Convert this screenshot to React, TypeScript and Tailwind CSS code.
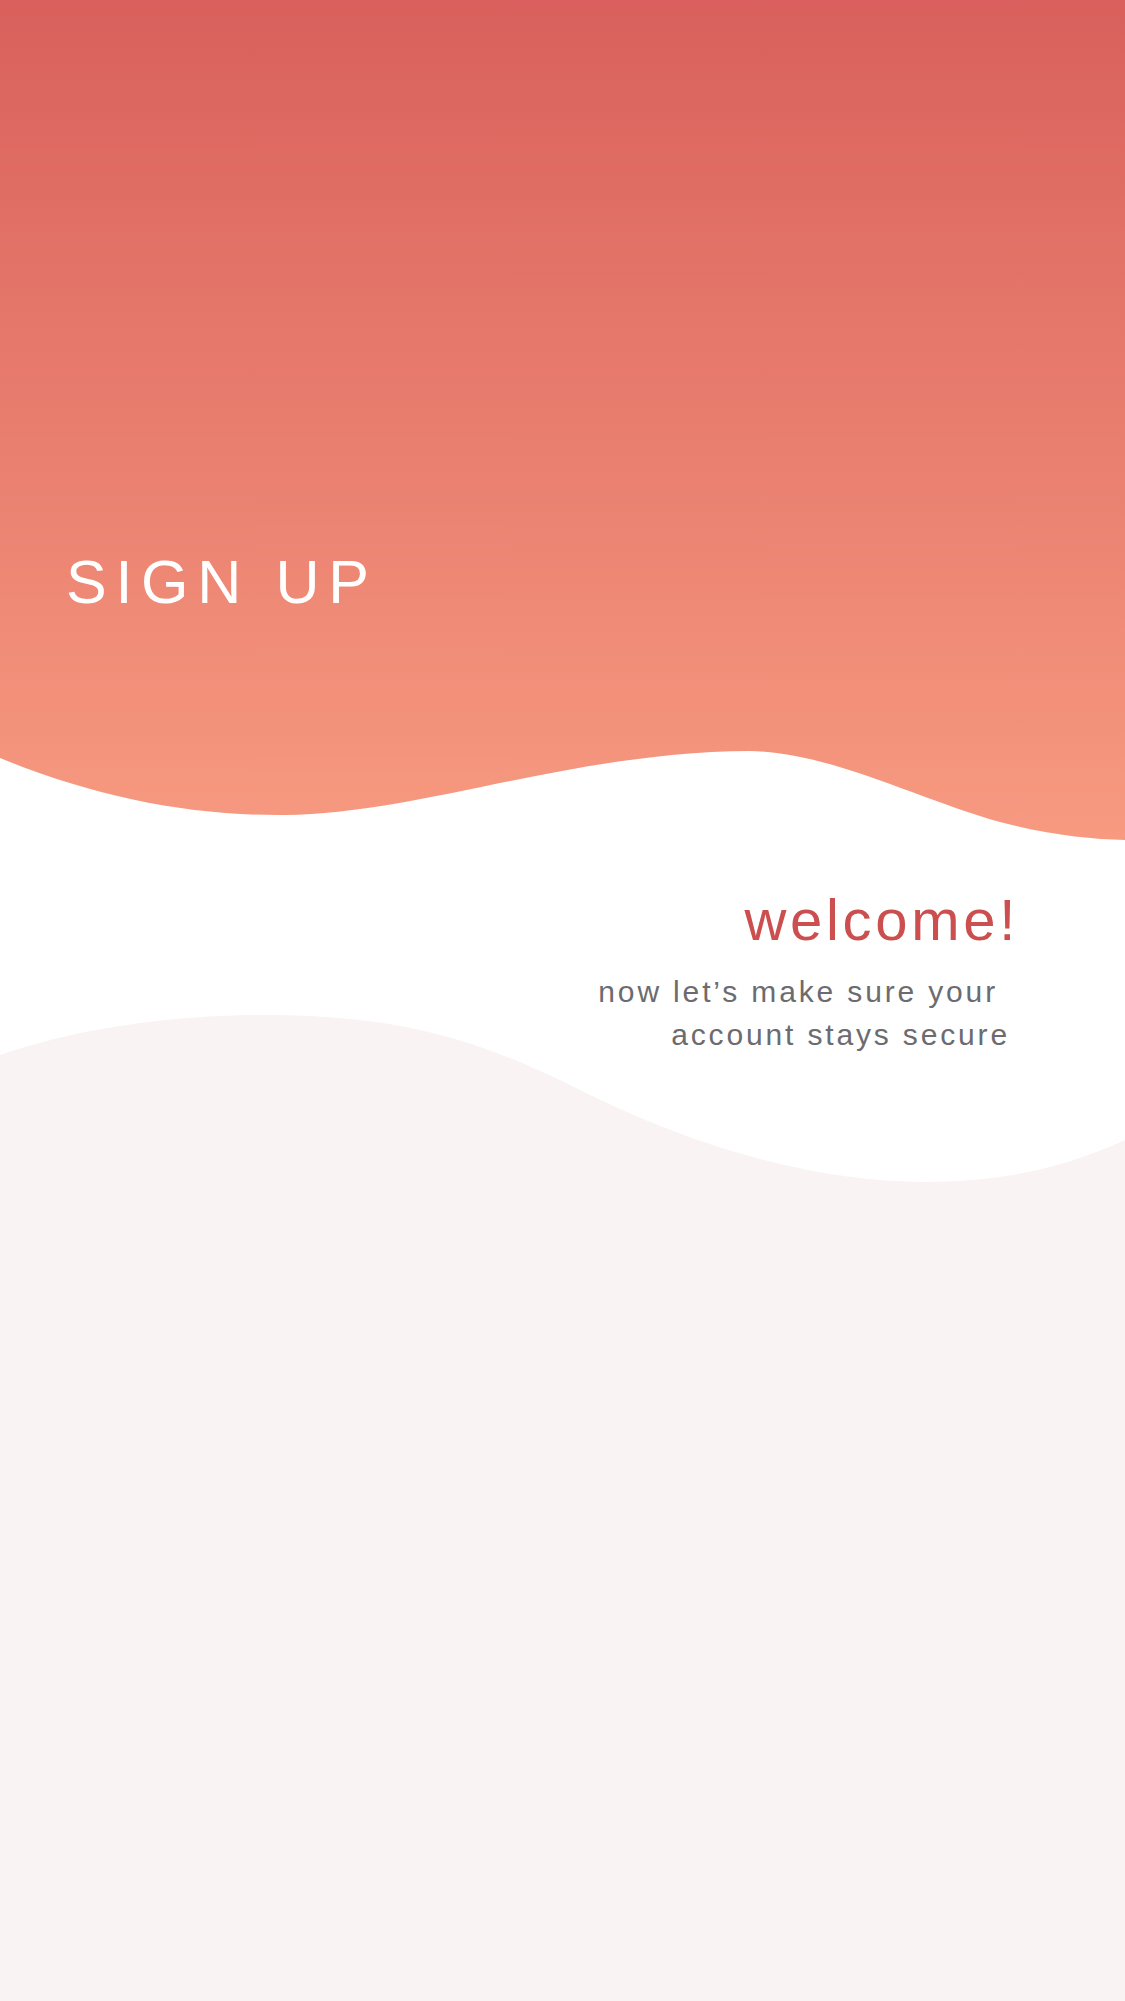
import React from "react";

function Background() {
  return (
    <svg
      className="absolute inset-0 h-full w-full"
      viewBox="0 0 1125 2001"
      preserveAspectRatio="none"
      aria-hidden="true"
    >
      <defs>
        <linearGradient id="topGrad" x1="0" y1="0" x2="0" y2="840" gradientUnits="userSpaceOnUse">
          <stop offset="0" stopColor="#d9605c" />
          <stop offset="1" stopColor="#f79a80" />
        </linearGradient>
      </defs>
      <path
        d="M0,0 H1125 V840 C1090,839 1050,835 1000,822 C920,800 830,752 750,751 C570,752 420,814 285,815 C190,816 95,797 0,758 Z"
        fill="url(#topGrad)"
      />
      <path
        d="M0,1055 C80,1028 170,1015 265,1015 C400,1015 480,1040 580,1090 C700,1150 820,1182 925,1182 C1010,1182 1070,1165 1125,1140 V2001 H0 Z"
        fill="#f9f3f3"
      />
    </svg>
  );
}

export default function App() {
  return (
    <div
      className="relative w-full h-[2001px] overflow-hidden bg-white"
      style={{ fontFamily: '"Liberation Sans", Arial, sans-serif' }}
    >
      <Background />
      <div className="relative flex flex-col">
        <h1 className="pt-[552px] pl-[66px] text-[61px] leading-[61px] tracking-[8.7px] text-white font-normal">
          SIGN UP
        </h1>
        <div className="mt-[278px] flex flex-col items-end">
          <div className="pr-[106px] text-[58px] leading-[58px] tracking-[3.7px] text-[#cc4f50]">
            welcome!
          </div>
          <div className="mt-[21px] flex flex-col items-end text-[30px] leading-[43px] tracking-[2.85px] text-[#6b6b70]">
            <span className="pr-[127px]">now let’s make sure your</span>
            <span className="pr-[115px]">account stays secure</span>
          </div>
        </div>
      </div>
    </div>
  );
}
